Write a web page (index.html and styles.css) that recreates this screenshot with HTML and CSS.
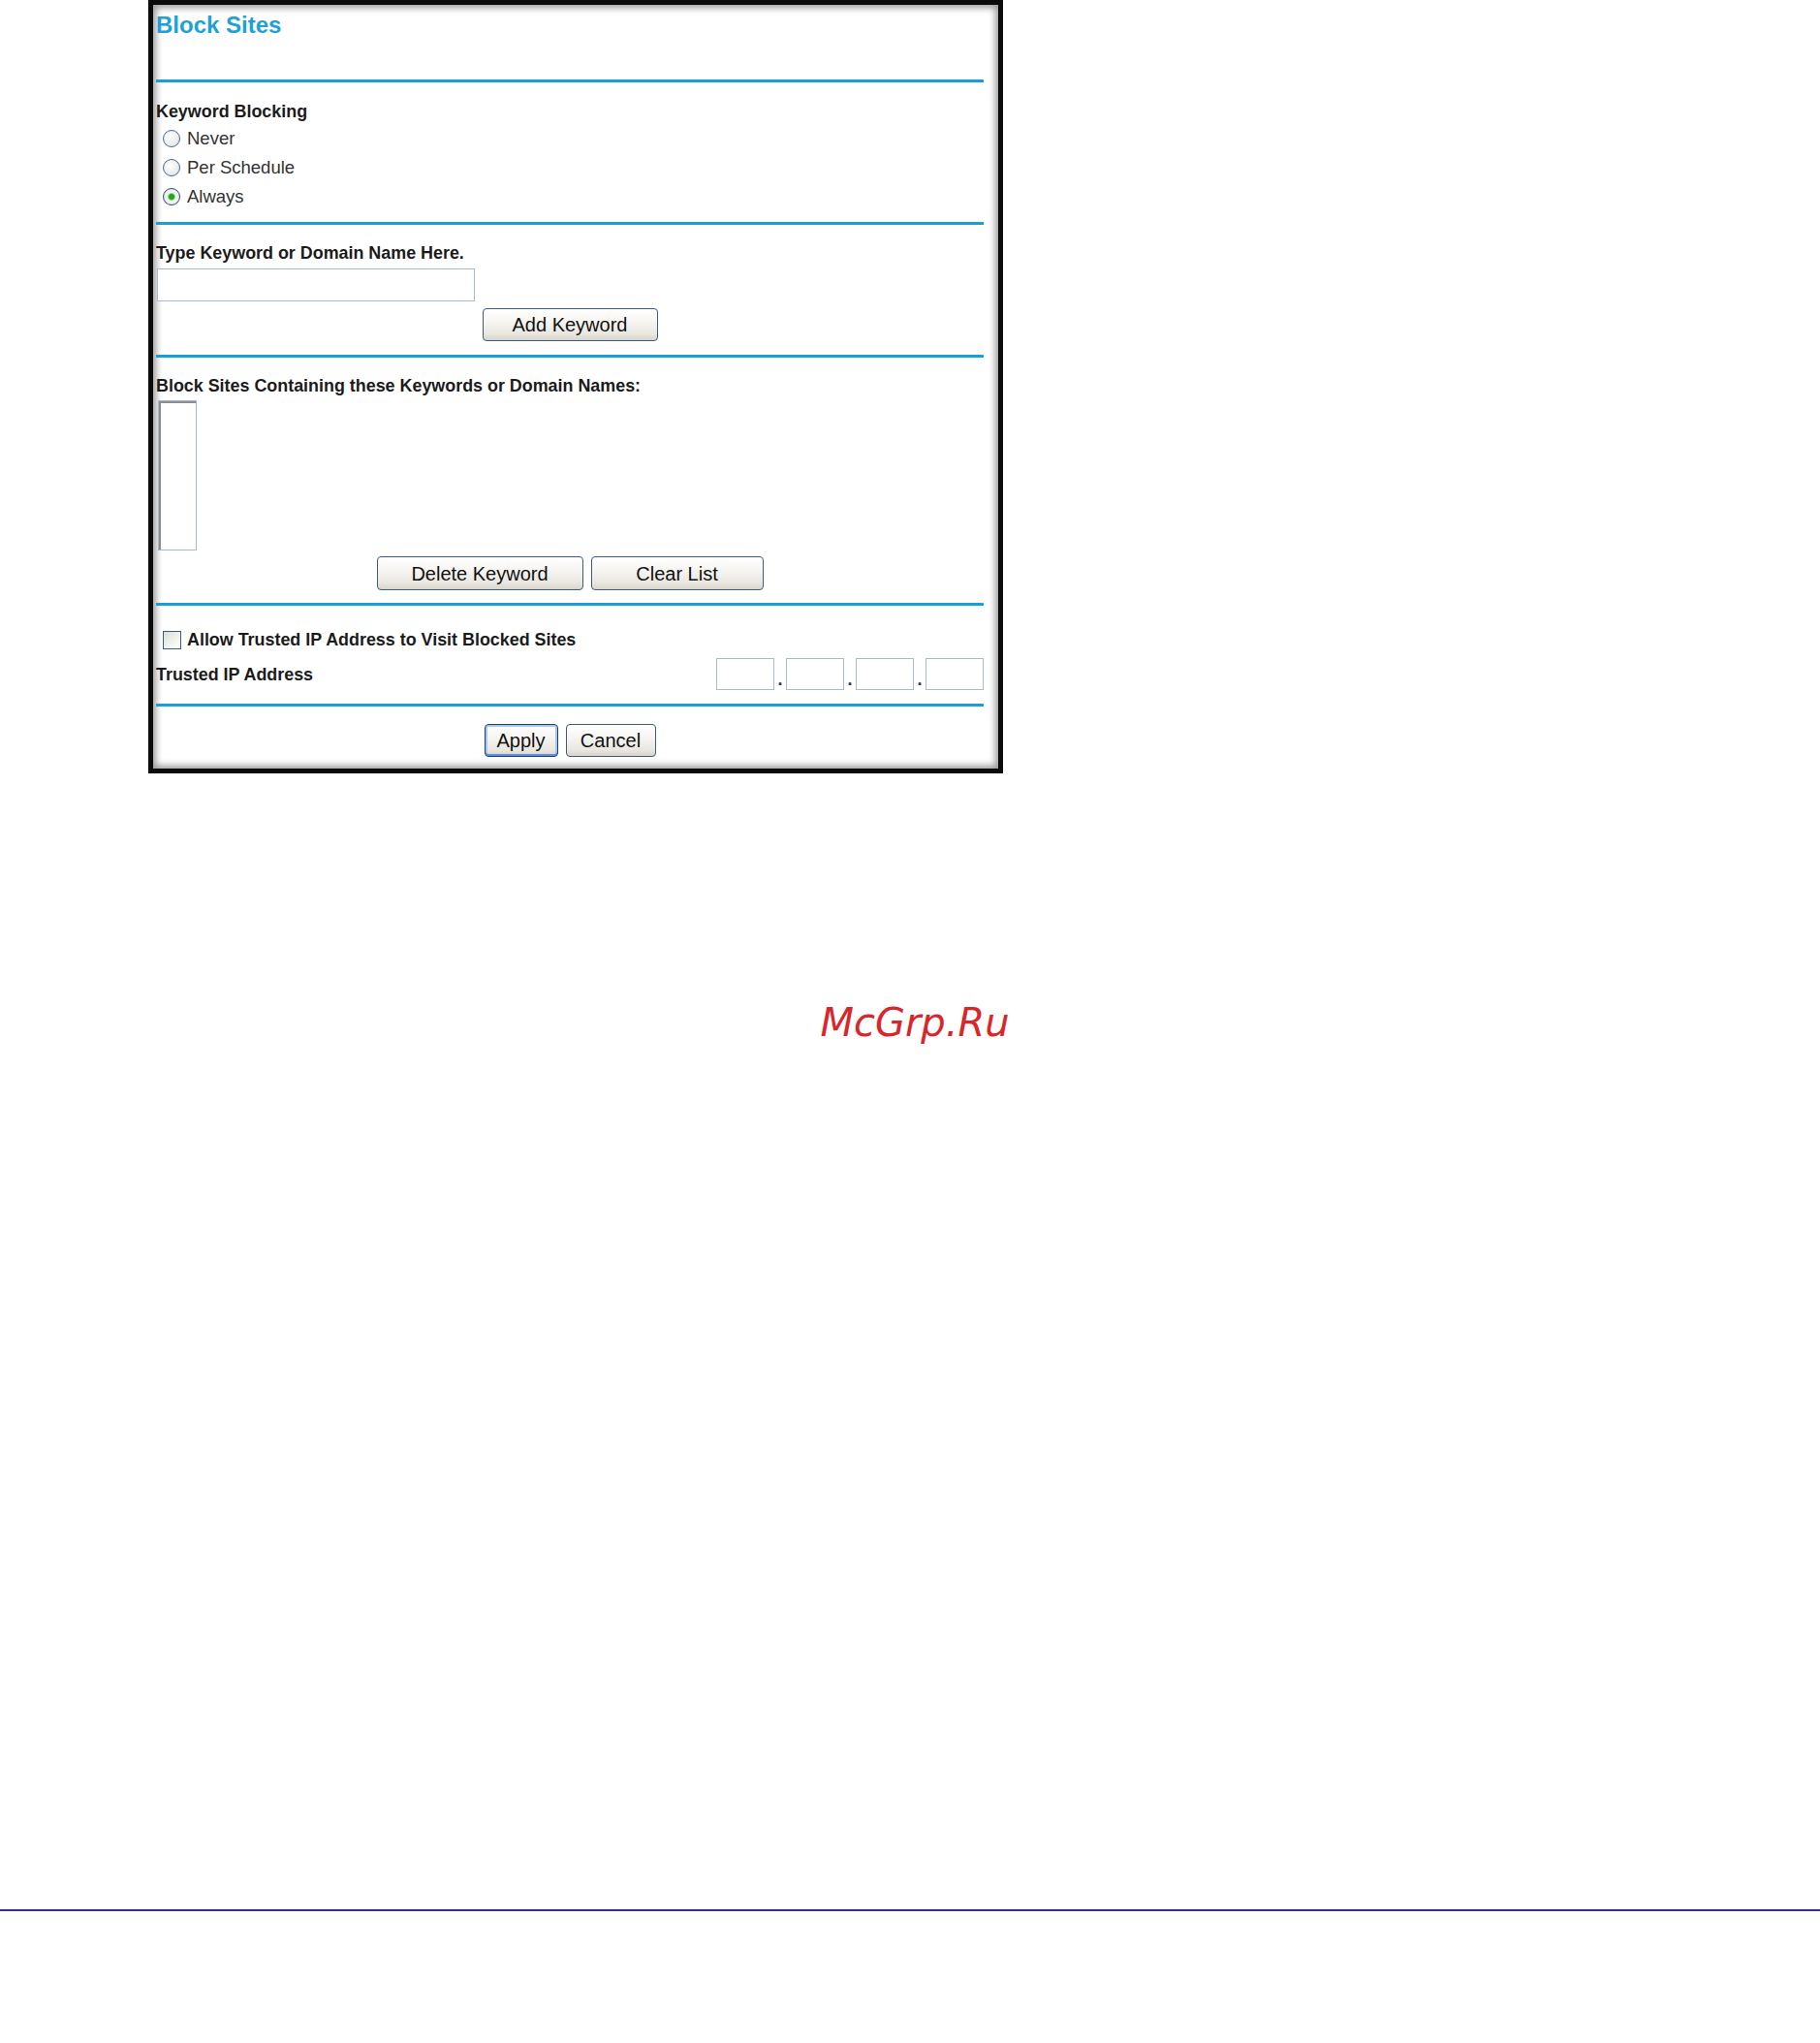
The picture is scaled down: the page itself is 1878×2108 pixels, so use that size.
FILE: index.html
```html
<!DOCTYPE html>
<html lang="en">
<head>
<meta charset="utf-8">
<title>Block Sites</title>
<link rel="stylesheet" href="styles.css">
</head>
<body>
<div class="page">
  <div class="frame">
    <div class="title">Block Sites</div>
    <div class="rule r1"></div>

    <div class="label kb">Keyword Blocking</div>
    <label class="radio-row r-first"><input type="radio" name="kb" class="radio"><span>Never</span></label>
    <label class="radio-row"><input type="radio" name="kb" class="radio"><span>Per Schedule</span></label>
    <label class="radio-row"><input type="radio" name="kb" class="radio" checked><span>Always</span></label>
    <div class="rule r2"></div>

    <div class="label tk">Type Keyword or Domain Name Here.</div>
    <input type="text" class="text-input">
    <div class="btn-row add-row"><button class="btn w-add">Add Keyword</button></div>
    <div class="rule r3"></div>

    <div class="label bs">Block Sites Containing these Keywords or Domain Names:</div>
    <div class="listbox"></div>
    <div class="btn-row del-row"><button class="btn w-del">Delete Keyword</button><button class="btn w-clear">Clear List</button></div>
    <div class="rule r4"></div>

    <label class="check-row"><input type="checkbox" class="checkbox"><span class="label">Allow Trusted IP Address to Visit Blocked Sites</span></label>
    <div class="ip-row">
      <span class="label">Trusted IP Address</span>
      <div class="ip">
        <input type="text" class="ipbox"><span class="dot">.</span><input type="text" class="ipbox"><span class="dot">.</span><input type="text" class="ipbox"><span class="dot">.</span><input type="text" class="ipbox">
      </div>
    </div>
    <div class="rule r5"></div>

    <div class="btn-row apply-row"><button class="btn btn-default w-apply">Apply</button><button class="btn w-cancel">Cancel</button></div>
  </div>

  <div class="watermark">McGrp.Ru</div>
  <div class="footer-rule"></div>
</div>
</body>
</html>
```
FILE: styles.css
```css
html, body {
  margin: 0;
  padding: 0;
  background: #ffffff;
}

.page {
  width: 1878px;
  height: 2108px;
  overflow: hidden;
  font-family: "Liberation Sans", Arial, sans-serif;
}

.frame {
  box-sizing: border-box;
  margin-left: 153px;
  width: 882px;
  height: 798px;
  border: 5px solid #0b0b0b;
  box-shadow: inset 0 0 7px 3px rgba(0, 0, 0, 0.4);
  padding: 6px 15px 0 3px;
  background: #ffffff;
}

.title {
  font-size: 24px;
  line-height: 30px;
  font-weight: bold;
  color: #1ea0d8;
  height: 30px;
}

.rule {
  height: 3px;
  background: #1c9dd7;
}
.r1 { margin-top: 41px; }
.r2 { margin-top: 11px; }
.r3 { margin-top: 14px; }
.r4 { margin-top: 13px; }
.r5 { margin-top: 14px; }

.label {
  font-size: 17.9px;
  line-height: 22px;
  font-weight: bold;
  color: #1b1b1b;
  white-space: nowrap;
}
.kb { margin-top: 19px; }
.tk { margin-top: 18px; }
.bs { margin-top: 18px; }

.radio-row {
  display: flex;
  align-items: center;
  height: 30px;
  font-size: 18.5px;
  color: #333333;
}
.r-first { margin-top: 2px; }

.radio {
  appearance: none;
  -webkit-appearance: none;
  box-sizing: border-box;
  width: 18px;
  height: 18px;
  margin: 0 7px 0 7px;
  border-radius: 50%;
  border: 1.5px solid #4a6a90;
  background: radial-gradient(circle at 40% 40%, #ffffff 0, #ececea 60%, #d6d6d0 100%);
}
.radio:checked {
  border-color: #2f4b6e;
  background: radial-gradient(circle at center, #1fa51f 0 2.5px, #8ed88e 3.5px, #f6f6f4 4.5px, #dcdcd7 100%);
}

.text-input {
  display: block;
  box-sizing: border-box;
  margin: 5px 0 0 1px;
  width: 328px;
  height: 34px;
  border: 1px solid #a8bbd2;
  background: #ffffff;
  padding: 0;
}

.btn-row {
  display: flex;
  justify-content: center;
}
.add-row { margin-top: 7px; }
.del-row { margin-top: 6px; gap: 8px; }
.apply-row { margin-top: 18px; gap: 8px; }

.btn {
  box-sizing: border-box;
  height: 34px;
  padding: 0;
  border: 1px solid #3d5b80;
  border-radius: 4px;
  background: linear-gradient(#ffffff 0%, #f6f5f1 40%, #e9e7e0 80%, #d8d4ca 100%);
  font-family: "Liberation Sans", Arial, sans-serif;
  font-size: 20px;
  color: #111111;
  line-height: 32px;
  text-align: center;
}
.del-row .btn { height: 35px; }
.w-add { width: 181px; }
.w-del { width: 213px; }
.w-clear { width: 178px; }
.w-apply { width: 76px; }
.w-cancel { width: 93px; }

.btn-default {
  border: 1px solid #1f3f78;
  box-shadow: inset 0 -2px 0 #5d8fe0, inset 0 0 0 2px #a7c6f2;
}

.listbox {
  box-sizing: border-box;
  margin: 4px 0 0 2px;
  width: 40px;
  height: 155px;
  border: 1px solid #a3b8d0;
  box-shadow: inset 2px 2px 0 #8e8e8e;
  background: #ffffff;
}

.check-row {
  display: flex;
  align-items: center;
  margin-top: 24px;
  height: 22px;
}
.checkbox {
  appearance: none;
  -webkit-appearance: none;
  box-sizing: border-box;
  width: 19px;
  height: 19px;
  margin: 0 6px 0 7px;
  border: 1.5px solid #3f5a7c;
  background: linear-gradient(135deg, #dcdcd6 0%, #f3f3f0 60%, #ffffff 100%);
}

.ip-row {
  display: flex;
  justify-content: space-between;
  align-items: center;
  margin-top: 8px;
  height: 33px;
}
.ip {
  display: flex;
  align-items: flex-end;
}
.ipbox {
  box-sizing: border-box;
  width: 60px;
  height: 33px;
  margin: 0;
  padding: 0;
  border: 1px solid #a8bbd2;
  background: #ffffff;
}
.dot {
  width: 12px;
  text-align: center;
  font-size: 18px;
  font-weight: bold;
  line-height: 22px;
  color: #333333;
}

.watermark {
  margin-top: 233px;
  padding-left: 10px;
  text-align: center;
  font-family: "DejaVu Sans", sans-serif;
  font-style: italic;
  font-size: 40px;
  line-height: 48px;
  color: #d8262c;
}

.footer-rule {
  margin-top: 891px;
  height: 2px;
  background: #2e3192;
}
```
